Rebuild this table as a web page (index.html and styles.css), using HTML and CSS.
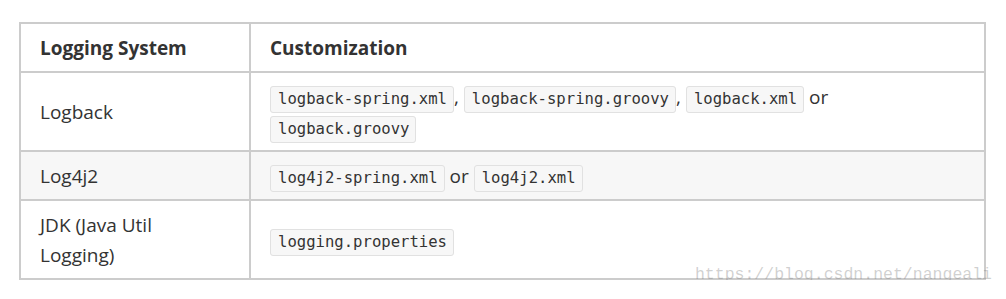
FILE: index.html
```html
<!DOCTYPE html>
<html lang="en">
  <head>
    <meta charset="UTF-8" />
    <title>Logging Systems</title>
    <link rel="stylesheet" href="styles.css">
  </head>
  <body>
    <div class="page">
      <table class="log-table">
        <thead>
          <tr>
            <th class="col-system">Logging System</th>
            <th>Customization</th>
          </tr>
        </thead>
        <tbody>
          <tr>
            <td>Logback</td>
            <td><code>logback-spring.xml</code>, <code>logback-spring.groovy</code>, <code>logback.xml</code> or <code>logback.groovy</code></td>
          </tr>
          <tr class="alt">
            <td>Log4j2</td>
            <td><code>log4j2-spring.xml</code> or <code>log4j2.xml</code></td>
          </tr>
          <tr>
            <td>JDK (Java Util Logging)</td>
            <td><code>logging.properties</code></td>
          </tr>
        </tbody>
      </table>
      <div class="watermark">https://blog.csdn.net/nangeali</div>
    </div>
  </body>
</html>
```

FILE: styles.css
```css
body {
  margin: 0;
  background-color: #fff;
  font-family: "Open Sans", "Liberation Sans", sans-serif;
  color: #333;
}
.page {
  position: relative;
  padding: 22px 20px 0 19px;
}
.log-table {
  width: 967px;
  border-collapse: collapse;
  font-size: 19px;
}
.log-table th,
.log-table td {
  border: 2px solid #ccc;
  text-align: left;
  vertical-align: middle;
  padding: 9px 18px 8px 19px;
  line-height: 30px;
}
.log-table th {
  font-weight: bold;
  padding-top: 9px;
  padding-bottom: 8px;
}
.col-system {
  width: 191px;
}
.log-table tr.alt td {
  background-color: #f7f7f7;
}
code {
  font-family: "DejaVu Sans Mono", "Liberation Mono", monospace;
  font-size: 15.6px;
  line-height: 1;
  color: #333;
  background-color: #f7f7f7;
  border: 1px solid #e1e1e1;
  border-radius: 3px;
  padding: 3px 6px 4px 7px;
}
.watermark {
  position: absolute;
  right: 14px;
  top: 265px;
  font-family: "Liberation Mono", monospace;
  font-size: 16.5px;
  color: rgba(120, 120, 120, 0.35);
}
```
